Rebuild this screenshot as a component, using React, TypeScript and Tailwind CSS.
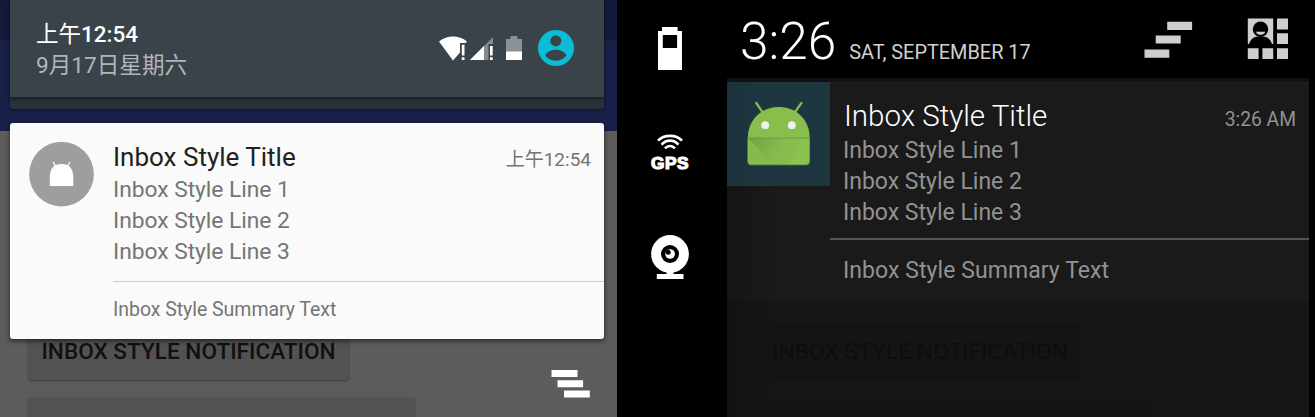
import React from "react";

const inboxLines = ["Inbox Style Line 1", "Inbox Style Line 2", "Inbox Style Line 3"];

function WifiIcon() {
  return (
    <svg width="28" height="26" viewBox="0 0 28 26" className="block shrink-0">
      <path d="M0 5.5C8-1.3 20-1.3 28 5.5L26.8 7H21v9.5L14 24.5Z" fill="#fff" />
      <path d="M22.8 8.7h2.7v10.8h-2.7zM22.8 21.2h2.7v2.8h-2.7z" fill="#fff" />
    </svg>
  );
}

function SignalIcon() {
  return (
    <svg width="24" height="25" viewBox="0 0 24 25" className="block shrink-0">
      <path d="M0 24L23 1v7h-4.5v16Z" fill="#858a8e" />
      <path d="M0 24L14 10v14Z" fill="#fff" />
      <path d="M20 10h2.7v9.5H20zM20 21.2h2.7v2.8H20z" fill="#fff" />
    </svg>
  );
}

function MaterialBattery() {
  return (
    <svg width="16" height="24" viewBox="0 0 16 24" className="block shrink-0">
      <path d="M0 3h4.5V0h7v3H16v13H0Z" fill="#8c9194" />
      <path d="M0 15.5h16V24H0Z" fill="#fff" />
    </svg>
  );
}

function AccountIcon() {
  return (
    <svg width="36" height="36" viewBox="0 0 36 36" className="block shrink-0">
      <circle cx="18" cy="18" r="18" fill="#0bbcd6" />
      <circle cx="17.8" cy="10.8" r="5.5" fill="#3b434a" />
      <path d="M7.2 25.2C11 17.8 24.5 17.8 28.4 25.2C23.5 32.5 12 32.5 7.2 25.2Z" fill="#3b434a" />
    </svg>
  );
}

function RobotBadge() {
  return (
    <svg width="65" height="65" viewBox="0 0 65 65" className="block shrink-0">
      <circle cx="32.5" cy="32.2" r="32.3" fill="#9e9e9e" />
      <path d="M20.8 44V33.7C21.5 25.7 25.5 22 32.5 22S43.5 25.7 44.3 33.7V44Z" fill="#fff" />
      <path d="M24.2 20l2.5 4.5M40.9 20l-2.5 4.5" stroke="#fff" strokeWidth="1.3" />
    </svg>
  );
}

function ClearDownIcon() {
  return (
    <svg width="40" height="28" viewBox="0 0 40 28" className="block">
      <path d="M.5 0h26v7H.5zM6.5 10.2h25.6v7H6.5zM13 20.4h25.8v7.2H13z" fill="#fff" />
    </svg>
  );
}

function ClearUpIcon() {
  return (
    <svg width="49" height="38" viewBox="0 0 49 38" className="block shrink-0">
      <path d="M23.2 .8h24.9V9H23.2zM11.7 14.4h25v8.2h-25zM.5 28.4h24.8v8.4H.5z" fill="#cfcfcf" />
    </svg>
  );
}

function QuickSettingsIcon() {
  return (
    <svg width="42" height="42" viewBox="0 0 42 42" className="block shrink-0">
      <path d="M.8.5h25.4v25.4H.8zM30 .5h11v11H30zM30 15.2h11V26H30zM.8 30.2h10.8v10.7H.8zM15.4 30.2h10.8v10.7H15.4zM30 30.2h11v10.7H30z" fill="#cfcfcf" />
      <circle cx="13.5" cy="11.3" r="7.7" fill="#000" />
      <path d="M2 26C3.5 21.6 6 19.2 9 18.7H18C21 19.2 23.4 21.6 25 26Z" fill="#000" />
      <path d="M9 13.7h9.2c-1.2 4.2-8 4.2-9.2 0Z" fill="#cfcfcf" />
    </svg>
  );
}

function HoloBattery() {
  return (
    <svg width="24" height="43" viewBox="0 0 24 43" className="block">
      <path fillRule="evenodd" d="M4 0h15.6v4H24v39H0V4h4ZM4.8 8v13h14.3V8Z" fill="#fff" />
    </svg>
  );
}

function SatelliteWaves() {
  return (
    <svg width="26" height="16" viewBox="0 0 26 16" className="block" fill="none" stroke="#fff" strokeWidth="2.7">
      <path d="M1 6.6C7 .3 19 .3 25 6.6M4.5 10.6C9.5 5.4 16.5 5.4 21.5 10.6M8 14.4C11 11.2 15 11.2 18 14.4" />
    </svg>
  );
}

function Webcam() {
  return (
    <svg width="38" height="44" viewBox="0 0 38 44" className="block">
      <circle cx="19" cy="19" r="18.9" fill="#fff" />
      <path d="M15.7 36h6.8v3h10v5H5.8v-5h9.9Z" fill="#fff" />
      <circle cx="19" cy="19" r="9" fill="#000" />
      <circle cx="19.1" cy="19" r="4.8" fill="#fff" />
      <circle cx="17.2" cy="17.2" r="2.5" fill="#000" />
    </svg>
  );
}

function AndroidRobot() {
  return (
    <svg width="103" height="104" viewBox="0 0 103 104" className="block shrink-0">
      <defs>
        <linearGradient id="tile" x1="0" x2="1">
          <stop offset="0" stopColor="#1b323b" />
          <stop offset=".35" stopColor="#1e3640" />
          <stop offset="1" stopColor="#1e3640" />
        </linearGradient>
        <linearGradient id="fold" gradientUnits="userSpaceOnUse" x1="24" y1="60" x2="50" y2="76">
          <stop offset="0" stopColor="#73a643" />
          <stop offset="1" stopColor="#88bd4d" />
        </linearGradient>
      </defs>
      <path d="M0 0h103v104H0Z" fill="url(#tile)" />
      <path d="M29.2 21l7 10M74.4 21l-7 10" stroke="#84b950" strokeWidth="2.3" strokeLinecap="round" />
      <path d="M20.8 56C20.8 37 35 25 51.8 25S82.7 37 82.7 56Z" fill="#8abe4c" />
      <path d="M20.8 56h61.9v23.5a3.4 3.4 0 0 1-3.4 3.4H24.2a3.4 3.4 0 0 1-3.4-3.4Z" fill="#8bc34f" />
      <path d="M20.8 56L47 82.9H24.2a3.4 3.4 0 0 1-3.4-3.4Z" fill="#80b549" />
      <path d="M20.8 56L47 82.9H62L75 56Z" fill="url(#fold)" />
      <path d="M20.8 56L47 82.9H24.2a3.4 3.4 0 0 1-3.4-3.4Z" fill="#86ba4b" />
      <path d="M20.8 56h61.9" stroke="#679246" strokeWidth=".8" />
      <path d="M21.5 81.3c.7 1.2 1.4 1.7 2.7 1.7h55c1.5 0 2.3-.5 2.8-1.7" stroke="#4d7340" strokeWidth=".8" fill="none" />
      <circle cx="38.2" cy="43.2" r="3.9" fill="#efefed" />
      <circle cx="64.8" cy="43.2" r="3.9" fill="#efefed" />
    </svg>
  );
}

function MaterialPhone() {
  return (
    <section className="relative h-[417px] w-[617px] shrink-0 overflow-hidden bg-[#5c5c5c]">
      <div className="absolute inset-0 flex flex-col">
        <div className="h-10 shrink-0 bg-[#131a3c]" />
        <div className="h-[90.5px] shrink-0 bg-[#192048]" />
        <div className="ml-[28px] mt-[189px] flex h-[60px] w-[321px] shrink-0 items-center justify-center rounded-[3px] bg-[#525252] pt-[4px] text-[22.6px] font-medium text-[#101010] shadow-[0_1px_2px_rgba(0,0,0,0.4)]">
          <span className="whitespace-nowrap">INBOX STYLE NOTIFICATION</span>
        </div>
        <div className="ml-[28px] mt-[18px] h-[40px] w-[387px] shrink-0 rounded-[3px] bg-[#525252] shadow-[0_0_2px_rgba(0,0,0,0.25)]" />
      </div>

      <div className="relative flex flex-col pl-[10px] pr-[13px]">
        <div className="h-[109px] rounded-b-[3px] bg-[#29333a] shadow-[0_1px_3px_rgba(0,0,0,0.4)]">
          <header className="flex h-[97px] justify-between bg-[#3b434a] pl-[26px] pr-[30px] shadow-[0_2px_4px_rgba(0,0,0,0.45)]">
            <div className="flex flex-col whitespace-nowrap pt-[18px]">
              <p className="text-[22.5px] font-medium leading-8 text-white"><span className="font-normal">上午</span>12:54</p>
              <p className="text-[22.6px] leading-8 text-[#b1b5b8]">9月17日星期六</p>
            </div>
            <div className="flex items-start pt-[30px]">
              <div className="mt-[6px]"><WifiIcon /></div>
              <div className="ml-[3px] mt-[6px]"><SignalIcon /></div>
              <div className="ml-[12px] mt-[6px]"><MaterialBattery /></div>
              <div className="ml-[16px]"><AccountIcon /></div>
            </div>
          </header>
        </div>

        <article className="mt-[13.5px] flex h-[216px] rounded-[3px] bg-[#fafafa] pl-[19px] shadow-[0_2px_5px_rgba(0,0,0,0.6)]">
          <div className="pt-[19px]"><RobotBadge /></div>
          <div className="ml-[19px] flex flex-1 flex-col whitespace-nowrap pt-[18.5px]">
            <div className="flex h-[33px] items-start justify-between pr-[13px]">
              <h2 className="text-[26px] leading-[33px] text-[#212121]">Inbox Style Title</h2>
              <time className="mt-[2px] text-[19px] leading-[33px] text-[#737373]">上午12:54</time>
            </div>
            <div className="text-[22.8px] leading-[31px] tracking-[-0.03px] text-[#757575]">
              {inboxLines.map((line) => <p key={line}>{line}</p>)}
            </div>
            <div className="mt-[14px] border-t border-[#cacaca] pt-[13px] text-[19.5px] leading-[29px] tracking-[-0.04px] text-[#757575]">Inbox Style Summary Text</div>
          </div>
        </article>
        <div className="mt-[31px] self-end pr-[13px]"><ClearDownIcon /></div>
      </div>
    </section>
  );
}

function HoloPhone() {
  return (
    <section className="flex h-[417px] flex-1 bg-black">
      <aside className="flex w-[110px] shrink-0 flex-col items-center pr-[4px] pt-[27px]">
        <HoloBattery />
        <div className="mt-[64px] flex flex-col items-center">
          <SatelliteWaves />
          <span className="mt-[3px] font-['Liberation_Sans',sans-serif] text-[17.3px] font-bold leading-[20px] tracking-[0.5px] text-white [-webkit-text-stroke:1.2px_white]">GPS</span>
        </div>
        <div className="mt-[62px]"><Webcam /></div>
      </aside>
      <div className="flex w-[582px] shrink-0 flex-col">
        <header className="flex h-[78px] shrink-0 items-start justify-between bg-black pl-[13px] pr-[20px]">
          <div className="flex items-baseline whitespace-nowrap pt-[12px] text-white">
            <span className="text-[51.3px] font-light leading-[60px]">3:26</span>
            <span className="ml-[13px] text-[19.9px] leading-[28px] text-[#d0d0d0]">SAT, SEPTEMBER 17</span>
          </div>
          <div className="flex items-start pt-[18px]">
            <div className="mt-[3px]"><ClearUpIcon /></div>
            <div className="ml-[54px]"><QuickSettingsIcon /></div>
          </div>
        </header>
        <div className="h-[4px] shrink-0 bg-[#111113]" />
        <article className="flex h-[218px] shrink-0 bg-[linear-gradient(90deg,#151515_0,#1a1a1a_9%,#1a1a1a)]">
          <AndroidRobot />
          <div className="flex flex-1 flex-col whitespace-nowrap border-t border-[#222]">
            <div className="flex h-[52px] items-start justify-between pl-[14px] pr-[13px] pt-[15px]">
              <h2 className="text-[29.5px] font-light leading-9 text-white">Inbox Style Title</h2>
              <time className="mt-[7px] text-[19.3px] leading-[30px] text-[#929292]">3:26 AM</time>
            </div>
            <div className="pl-[13px] text-[23px] leading-[31px] text-[#929292]">
              {inboxLines.map((line) => <p key={line}>{line}</p>)}
            </div>
            <div className="mt-[10px] border-t-2 border-[#555] pl-[13px] pt-[15px] text-[23px] leading-[31px] tracking-[0.07px] text-[#929292]">Inbox Style Summary Text</div>
          </div>
        </article>
        <div className="flex h-[117px] shrink-0 flex-col overflow-hidden bg-[linear-gradient(90deg,#121212_0,#161616_8%,#161616)] pl-[33px] pt-[23px]">
          <div className="flex h-[58px] w-[320px] shrink-0 items-center justify-center rounded-[3px] bg-[#141414] text-[22.9px] text-[#0d0d0d]">
            <span className="whitespace-nowrap">INBOX STYLE NOTIFICATION</span>
          </div>
          <div className="mt-[19px] h-10 w-[390px] shrink-0 bg-[#141414]" />
        </div>
      </div>
    </section>
  );
}

export default function App() {
  return (
    <main className="flex h-[417px] w-[1315px] overflow-hidden bg-black font-[Roboto,'Noto_Sans_CJK_SC',sans-serif]">
      <MaterialPhone />
      <HoloPhone />
    </main>
  );
}
